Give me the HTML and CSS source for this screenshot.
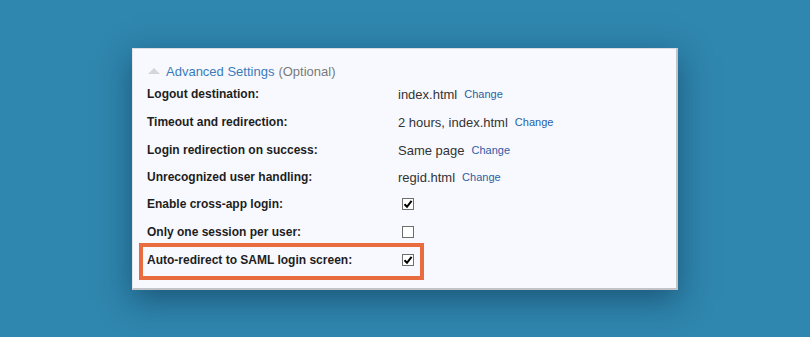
FILE: index.html
```html
<!DOCTYPE html>
<html lang="en">
<head>
<meta charset="utf-8">
<title>Advanced Settings</title>
<link rel="stylesheet" href="styles.css">
</head>
<body>
<div class="card">
  <div class="header">
    <span class="tri"></span>
    <a class="header-link" href="#">Advanced Settings</a>
    <span class="optional">(Optional)</span>
  </div>
  <div class="row">
    <div class="label">Logout destination:</div>
    <div class="value">index.html <a class="change" href="#">Change</a></div>
  </div>
  <div class="row">
    <div class="label">Timeout and redirection:</div>
    <div class="value">2 hours, index.html <a class="change" href="#">Change</a></div>
  </div>
  <div class="row">
    <div class="label">Login redirection on success:</div>
    <div class="value">Same page <a class="change" href="#">Change</a></div>
  </div>
  <div class="row row-short">
    <div class="label">Unrecognized user handling:</div>
    <div class="value">regid.html <a class="change" href="#">Change</a></div>
  </div>
  <div class="row">
    <div class="label">Enable cross-app login:</div>
    <div class="value"><span class="cb"><svg viewBox="0 0 10 10" width="10" height="10"><path d="M1.5 5.2 L4 7.8 L8.6 1.8" fill="none" stroke="#000" stroke-width="2"/></svg></span></div>
  </div>
  <div class="row">
    <div class="label">Only one session per user:</div>
    <div class="value"><span class="cb"></span></div>
  </div>
  <div class="row row-highlight">
    <div class="label">Auto-redirect to SAML login screen:</div>
    <div class="value"><span class="cb"><svg viewBox="0 0 10 10" width="10" height="10"><path d="M1.5 5.2 L4 7.8 L8.6 1.8" fill="none" stroke="#000" stroke-width="2"/></svg></span></div>
  </div>
</div>
</body>
</html>
```

FILE: styles.css
```css
html, body {
  margin: 0;
  padding: 0;
}
body {
  width: 810px;
  height: 337px;
  box-sizing: border-box;
  padding: 48px 0 0 132px;
  background: #2f86ae;
  font-family: "Liberation Sans", Arial, sans-serif;
  overflow: hidden;
}
.card {
  box-sizing: border-box;
  width: 546px;
  height: 242px;
  background: #f8f9fe;
  border-top: 1px solid #d9dbe0;
  border-left: 1px solid #e4e6ea;
  border-right: 2px solid #c2c4c8;
  border-bottom: 2px solid #c2c4c8;
  box-shadow: 0 10px 30px rgba(10, 40, 70, 0.5);
  padding: 14px 0 0 14px;
}
.header {
  height: 17px;
  display: flex;
  align-items: center;
  font-size: 13px;
  line-height: 17px;
  padding-left: 1px;
}
.tri {
  width: 0;
  height: 0;
  border-left: 6px solid transparent;
  border-right: 6px solid transparent;
  border-bottom: 6px solid #d3d6db;
  margin-right: 6px;
  margin-top: -2px;
}
.header-link {
  color: #3a7cbb;
  text-decoration: none;
  margin-right: 4px;
}
.optional {
  color: #7a7a7a;
}
.row {
  position: relative;
  display: flex;
  align-items: center;
  height: 28px;
}
.row-short {
  height: 26px;
}
.label {
  width: 251px;
  font-size: 12px;
  font-weight: bold;
  color: #1e1e1e;
}
.value {
  font-size: 13px;
  color: #333;
  display: flex;
  align-items: center;
}
.change {
  font-size: 11px;
  color: #2a5ea6;
  text-decoration: none;
  margin-left: 7px;
}
.cb {
  box-sizing: border-box;
  width: 12px;
  height: 12px;
  border: 1px solid #6e6e6e;
  background: #fff;
  margin-left: 4px;
  display: flex;
  align-items: center;
  justify-content: center;
}
.cb svg {
  display: block;
}
.row-highlight::after {
  content: "";
  position: absolute;
  left: -8px;
  top: -3px;
  width: 285px;
  height: 37px;
  box-sizing: border-box;
  border: 4px solid #e96c3e;
  pointer-events: none;
}
```
